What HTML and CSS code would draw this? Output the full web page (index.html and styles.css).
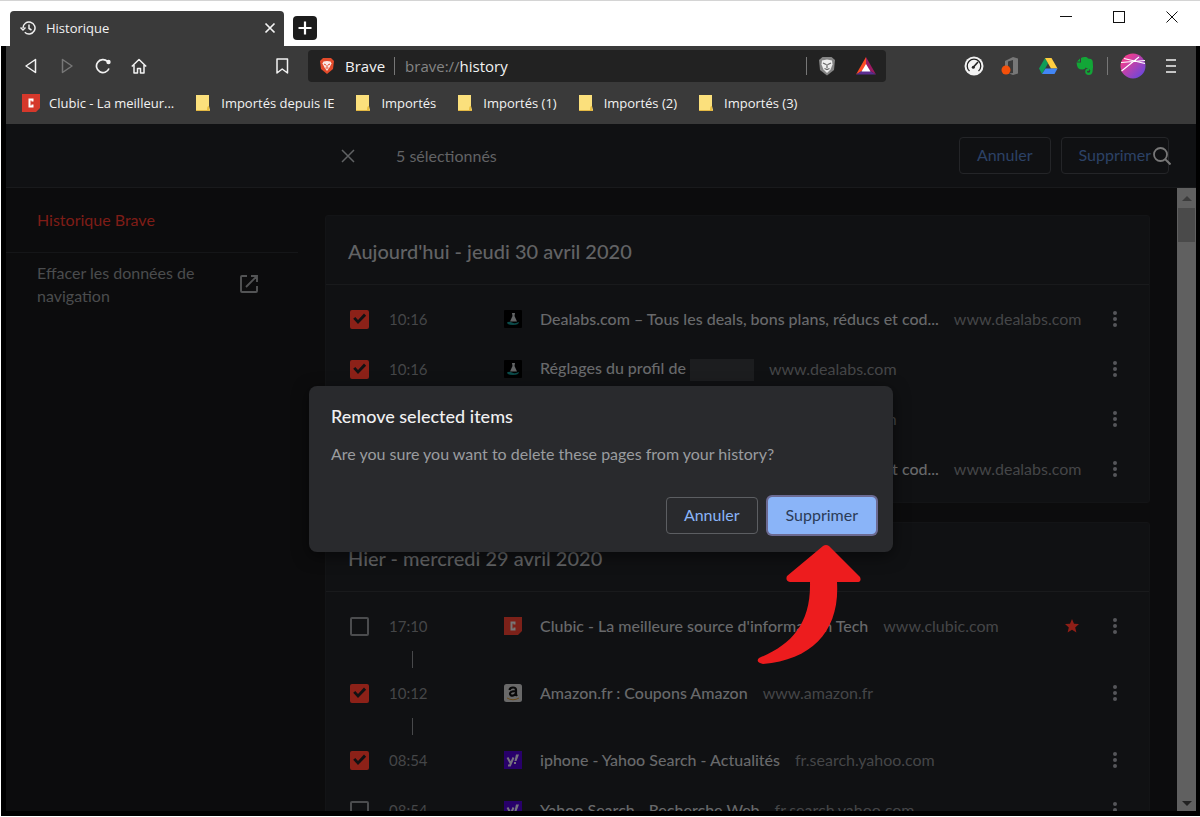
FILE: index.html
```html
<!DOCTYPE html>
<html lang="fr">
<head>
<meta charset="utf-8">
<title>Historique</title>
<link rel="stylesheet" href="styles.css">
</head>
<body>
<svg class="symbols" aria-hidden="true">
  <symbol id="dealabs" viewBox="0 0 18 18"><rect width="18" height="18" rx="1" fill="#000"/><path d="M8 3h3L10.500 6 13 11.500H6L8.500 6z" fill="#626465"/><path d="M3 12.500Q5 11 8 12.500T15 12Q15 15 9 15T3 12.500" fill="#0b4a49"/></symbol>
  <symbol id="clubic" viewBox="0 0 18 18"><path d="M0 0h18v14l-4 4H0z"/><path d="M10.500 7.500V5.500h-3v7h3v-2" fill="none" stroke="currentColor" stroke-width="2"/></symbol>
  <symbol id="yahoo" viewBox="0 0 18 18"><rect width="18" height="18" fill="#28006a"/><path d="M3.500 6.500 6.500 12M9.500 6.500 6 14.500H4" fill="none" stroke="#77727f" stroke-width="2"/><path d="M12 3.500h3L12.500 10H10.500zM10 11h2v2h-2z" fill="#77727f"/></symbol>
  <symbol id="dots" viewBox="0 0 6 18"><circle cx="3" cy="3" r="2"/><circle cx="3" cy="9" r="2"/><circle cx="3" cy="15" r="2"/></symbol>
  <symbol id="folder" viewBox="0 0 16 18"><path d="M1 1h13v11l1 4v1H1z" fill="#fbe07c"/><path d="M12 17c0-3 0-5 2-5v5z" fill="#e9bd3f"/><path d="M1 16h14v1H1z" fill="#e3b843"/></symbol>
</svg>

<header class="titlebar">
  <div class="tab">
    <svg class="i16" viewBox="0 0 16 16" fill="none" stroke="#f0f0f0" stroke-width="1.500"><path d="M3 8a6 6 0 1 1 1.800 4.300M.5 7.500 3 10l2.500-2.500M9 4.500V8.500l2.500 1.500"/></svg>
    <span class="tab-title">Historique</span>
    <button class="plain" aria-label="Fermer l'onglet"><svg class="i12" viewBox="0 0 12 12"><path d="m1.500 1.500 9 9m0-9-9 9" stroke="#f4f4f4" stroke-width="1.700"/></svg></button>
  </div>
  <button class="newtab" aria-label="Nouvel onglet"><svg class="i16" viewBox="0 0 16 16"><path d="M8 1.500v13M1.500 8h13" stroke="#fff" stroke-width="2.200"/></svg></button>
  <div class="winbuttons">
    <button class="plain" aria-label="Réduire"><svg class="i12" viewBox="0 0 12 12"><path d="M0 5.500h12" stroke="#111"/></svg></button>
    <button class="plain" aria-label="Agrandir"><svg class="i12" viewBox="0 0 12 12"><rect x=".5" y=".5" width="11" height="11" fill="none" stroke="#111"/></svg></button>
    <button class="plain" aria-label="Fermer"><svg class="i12" viewBox="0 0 12 12"><path d="m.5.5 11 11m0-11-11 11" stroke="#111"/></svg></button>
  </div>
</header>

<div class="window">
  <nav class="toolbar">
    <div class="navbuttons">
      <button class="plain" aria-label="Précédent"><svg class="i16" viewBox="0 0 16 16"><path d="M12.500 1.500v13L3 8z" fill="none" stroke="#f2f2f2" stroke-width="1.500" stroke-linejoin="round"/></svg></button>
      <button class="plain" aria-label="Suivant"><svg class="i16" viewBox="0 0 16 16"><path d="M3.500 1.500v13L13 8z" fill="none" stroke="#777" stroke-width="1.500" stroke-linejoin="round"/></svg></button>
      <button class="plain" aria-label="Actualiser"><svg class="i16" viewBox="0 0 16 16"><path d="M14 10.500A6.500 6.500 0 1 1 12.500 3.400" fill="none" stroke="#f2f2f2" stroke-width="1.700"/><circle cx="13.500" cy="4" r="2.200" fill="#f2f2f2"/></svg></button>
      <button class="plain" aria-label="Accueil"><svg class="i16" viewBox="0 0 16 16"><path d="M.8 8.500 8 1.500l7.200 7M3 7v8h3.500v-4.500h3V15H13V7" fill="none" stroke="#f2f2f2" stroke-width="1.500" stroke-linejoin="round"/></svg></button>
    </div>
    <button class="plain mark" aria-label="Ajouter aux favoris"><svg class="i16" viewBox="0 0 16 16"><path d="M3 1h10.500v14L8.200 11 3 15z" fill="none" stroke="#f2f2f2" stroke-width="1.500" stroke-linejoin="round"/></svg></button>
    <div class="urlbar">
      <svg class="i18" viewBox="0 0 18 18"><path d="M5 1h8l3 3-1 8-6 5-6-5L2 4z" fill="#e34b2b"/><path d="M5.500 4.500 9 4l3.500.5 1 2-2 4L9 14l-2.500-3.500-2-4z" fill="#fbe9e4"/><path d="m6 7 2 1m4-1-2 1m-1 0v2.500m-1.500.5h3" stroke="#e34b2b" fill="none"/></svg>
      <span class="brand">Brave</span><span class="bar"></span>
      <span class="url"><span class="scheme">brave://</span>history</span>
      <span class="bar"></span>
      <svg class="i20" viewBox="0 0 20 20"><path d="M5.500 1h9L18 4l-1 10-7 5.500L3 14 2 4z" fill="#858585"/><path d="M5 4.500 10 3.500l5 1 .5 4-2 5L10 17l-3.500-3.500-2-5z" fill="#eee"/><path d="m6 7 3 1.500M14 7l-3 1.500M10 8v4m-2.500.5 2.500 1 2.500-1" stroke="#666" fill="none" stroke-width="1.200"/></svg>
      <svg class="i20" viewBox="0 0 20 20"><path d="M10 1 0 18.500l10-6z" fill="#ff4b24"/><path d="m10 1 10 17.500-10-6z" fill="#9d1b63"/><path d="M0 18.500h20l-10-6z" fill="#5b2d91"/><path d="m10 8 4.500 7.500h-9z" fill="#fff"/></svg>
    </div>
    <div class="extensions">
      <svg class="i20" viewBox="0 0 20 20"><circle cx="10" cy="10" r="9.500" fill="#f2f2f2"/><path d="M5.500 15a6.800 6.800 0 1 1 9 0" fill="none" stroke="#222" stroke-width="1.300"/><path d="m9.500 11 4.500-5" stroke="#222" stroke-width="1.600"/><circle cx="9.300" cy="11.300" r="1.500" fill="#222"/></svg>
      <svg class="i20" viewBox="0 0 20 20"><path d="M4 5 12 1l5 1.500v15L12 19l-4-1.500 4-.5V4L7 5.500V12l-3 1z" fill="#777"/><circle cx="5" cy="14" r="4.500" fill="#f4500b"/></svg>
      <svg class="i20" viewBox="0 0 20 20"><path d="M7 2 1 12.500 4 18l6-10.500z" fill="#109d58"/><path d="M7 2h6.500l6 10.500H13z" fill="#ffcd40"/><path d="M7.500 12.500h12L16.500 18H4z" fill="#4286f5"/></svg>
      <svg class="i20" viewBox="0 0 20 20"><path d="M1.500 6.500H6V2q2-1.500 5-1 1.500.3 2 1.500l3 .5q1.500.5 1.700 2.500.8 6-.2 10.500-.7 3-3.500 3c-3 0-3.800-1.500-3.800-3.500 0-2.500 2-3 4-2.500v1.700h-1.500q-1 .3-.7 1.300.3.800 1.500.8 1.800 0 1.800-2.300 0-1.700-2.500-2-1.500-.2-2-1-.7 2-3 2-3.500 0-4.800-1.500-1-1.500-1.500-5.500zM2 5.500 5 2.500v3z" fill="#12a637"/></svg>
      <span class="bar"></span>
      <svg class="avatar" viewBox="0 0 26 26"><defs><linearGradient id="av" x1="0" y1="0" x2="1" y2="1"><stop offset=".2" stop-color="#ed3d91"/><stop offset="1" stop-color="#5549e8"/></linearGradient></defs><circle cx="13" cy="13" r="12.500" fill="url(#av)"/><path d="M4 5.500 25 10.500M1.500 18 19 4M1 9.500l24-2" fill="none" stroke="#fff" stroke-width="1.100"/></svg>
      <button class="plain" aria-label="Menu"><svg class="i16" viewBox="0 0 16 16"><path d="M3 2h10M3 8h10M3 14h10" stroke="#f4f4f4" stroke-width="1.700"/></svg></button>
    </div>
  </nav>
  <nav class="bookmarks">
    <a href="#clubic"><svg class="i18 clubic-bright"><use href="#clubic"/></svg>Clubic - La meilleur...</a>
    <a href="#ie"><svg class="i18"><use href="#folder"/></svg>Importés depuis IE</a>
    <a href="#imp"><svg class="i18"><use href="#folder"/></svg>Importés</a>
    <a href="#imp1"><svg class="i18"><use href="#folder"/></svg>Importés (1)</a>
    <a href="#imp2"><svg class="i18"><use href="#folder"/></svg>Importés (2)</a>
    <a href="#imp3"><svg class="i18"><use href="#folder"/></svg>Importés (3)</a>
  </nav>

  <div class="page">
    <div class="selection">
      <button class="plain" aria-label="Effacer la sélection"><svg class="i14" viewBox="0 0 14 14"><path d="m1 1 12 12M13 1 1 13" stroke="#606264" stroke-width="1.500"/></svg></button>
      <span class="count">5 sélectionnés</span>
      <button class="btn dim">Annuler</button>
      <div class="delete-wrap"><button class="btn dim">Supprimer</button><svg class="search i18" viewBox="0 0 18 18"><circle cx="7.500" cy="7.500" r="6.500" fill="none" stroke="#777" stroke-width="1.800"/><path d="m12 12 5.500 5.500" stroke="#777" stroke-width="2"/></svg></div>
    </div>
    <div class="columns">
      <aside class="sidebar">
        <a class="current" href="#history">Historique Brave</a>
        <a class="clear" href="#clear"><span>Effacer les données de navigation</span><svg class="i20" viewBox="0 0 20 20"><path d="M8 2H3q-1 0-1 1v14q0 1 1 1h14q1 0 1-1v-5M12 2h6v6M18 2 7 13" fill="none" stroke="#535455" stroke-width="1.900"/></svg></a>
      </aside>
      <main class="list">
        <section class="card">
          <h2>Aujourd'hui - jeudi 30 avril 2020</h2>
          <ul>
            <li><input type="checkbox" aria-label="Dealabs.com" checked><time>10:16</time><svg class="fav"><use href="#dealabs"/></svg><a class="title" href="#a1">Dealabs.com – Tous les deals, bons plans, réducs et cod...</a><span class="domain">www.dealabs.com</span><button class="plain more" aria-label="Actions"><svg><use href="#dots"/></svg></button></li>
            <li><input type="checkbox" aria-label="Réglages du profil" checked><time>10:16</time><svg class="fav"><use href="#dealabs"/></svg><a class="title" href="#a2">Réglages du profil de <span class="redacted"></span></a><span class="domain">www.dealabs.com</span><button class="plain more" aria-label="Actions"><svg><use href="#dots"/></svg></button></li>
            <li><input type="checkbox" aria-label="Réglages du profil" checked><time>10:16</time><svg class="fav"><use href="#dealabs"/></svg><a class="title" href="#a3">Réglages du profil de <span class="redacted"></span></a><span class="domain">www.dealabs.com</span><button class="plain more" aria-label="Actions"><svg><use href="#dots"/></svg></button></li>
            <li><input type="checkbox" aria-label="Dealabs.com"><time>10:16</time><svg class="fav"><use href="#dealabs"/></svg><a class="title" href="#a4">Dealabs.com – Tous les deals, bons plans, réducs et cod...</a><span class="domain">www.dealabs.com</span><button class="plain more" aria-label="Actions"><svg><use href="#dots"/></svg></button></li>
          </ul>
        </section>
        <section class="card">
          <h2>Hier - mercredi 29 avril 2020</h2>
          <ul>
            <li class="gap"><input type="checkbox" aria-label="Clubic"><time>17:10</time><svg class="fav clubic-dim"><use href="#clubic"/></svg><a class="title" href="#b1">Clubic - La meilleure source d'information Tech</a><span class="domain">www.clubic.com</span><svg class="star" viewBox="0 0 14 14"><path d="m7 0 2 4.700 5 .4-3.800 3.300L11.400 13.500 7 10.800l-4.400 2.700 1.200-5.100L0 5.100l5-.4z" fill="#8f1f17"/></svg><button class="plain more" aria-label="Actions"><svg><use href="#dots"/></svg></button></li>
            <li class="gap"><input type="checkbox" aria-label="Amazon" checked><time>10:12</time><svg class="fav" viewBox="0 0 18 18"><rect width="18" height="18" rx="2.500" fill="#696969"/><path d="M5.500 6Q6 3.500 9 3.500t3 2.500v4.500l1 1.500M12 7Q6 7 6 9.800c0 2.500 5 2.500 6-1" fill="none" stroke="#080808" stroke-width="2.200"/><path d="M3 14q6 3.500 12 0" fill="none" stroke="#6b4a17"/></svg><a class="title" href="#b2">Amazon.fr : Coupons Amazon</a><span class="domain">www.amazon.fr</span><button class="plain more" aria-label="Actions"><svg><use href="#dots"/></svg></button></li>
            <li><input type="checkbox" aria-label="iphone" checked><time>08:54</time><svg class="fav"><use href="#yahoo"/></svg><a class="title" href="#b3">iphone - Yahoo Search - Actualités</a><span class="domain">fr.search.yahoo.com</span><button class="plain more" aria-label="Actions"><svg><use href="#dots"/></svg></button></li>
            <li><input type="checkbox" aria-label="Yahoo Search"><time>08:54</time><svg class="fav"><use href="#yahoo"/></svg><a class="title" href="#b4">Yahoo Search - Recherche Web</a><span class="domain">fr.search.yahoo.com</span><button class="plain more" aria-label="Actions"><svg><use href="#dots"/></svg></button></li>
          </ul>
        </section>
      </main>
      <div class="scrollbar"><span class="up"></span><span class="thumb"></span><span class="down"></span></div>
    </div>

    <div class="overlay">
      <div class="dialog" role="dialog" aria-labelledby="dlg-title">
        <h1 id="dlg-title">Remove selected items</h1>
        <p>Are you sure you want to delete these pages from your history?</p>
        <div class="actions"><button class="btn">Annuler</button><button class="btn primary">Supprimer</button></div>
        <svg class="arrow" viewBox="0 0 104 120"><path d="M66 2q3-2 6 0l31 31q2 5-3 5H80c3 48-24 78-74 82q-8-2-4-6c32-13 52-34 51-76H33q-5-1-3-6z" fill="#ed1c1e"/></svg>
      </div>
    </div>
  </div>
</div>
</body>
</html>
```

FILE: styles.css
```css
* { box-sizing: border-box; }
body {
  margin: 0;
  height: 100vh;
  display: flex;
  flex-direction: column;
  background: #fff;
  border-top: 1px solid #d4d4d4;
  padding-bottom: 1px;
  font: 14px/20px "Open Sans", sans-serif;
  color: #f2f2f2;
  overflow: hidden;
}
a { color: inherit; text-decoration: none; }
svg { display: block; flex: none; }
.symbols { position: absolute; width: 0; height: 0; }
.plain { border: 0; padding: 0; background: none; flex: none; }
.i12 { width: 12px; height: 12px; }
.i14 { width: 14px; height: 14px; }
.i16 { width: 16px; height: 16px; }
.i18 { width: 18px; height: 18px; }
.i20 { width: 20px; height: 20px; }

.titlebar { display: flex; height: 45px; flex: none; padding: 10px 22px 0 10px; }
.tab {
  display: flex; align-items: center; gap: 10px;
  width: 274px; padding: 0 8px 2px 10px;
  background: #3a3a3a; border-radius: 4px 4px 0 0;
  font-size: 13px;
}
.tab-title { flex: 1; }
.newtab {
  width: 24px; height: 24px; margin: 5px 0 0 9px; padding: 4px;
  border: 0; border-radius: 4px; background: #1c1c1c;
}
.winbuttons { display: flex; gap: 41px; margin-left: auto; height: 12px; }

.window {
  flex: 1; min-height: 0; display: flex; flex-direction: column;
  margin-left: 1px;
  border: solid #000; border-width: 0 4px 5px 5px;
  background: #3a3a3a;
}
.toolbar { display: flex; align-items: center; height: 40px; padding: 0 17px; flex: none; }
.navbuttons { display: flex; gap: 20px; }
.mark { margin-left: auto; margin-right: 18px; }
.urlbar {
  flex: none; width: 50%; height: 32px;
  display: flex; align-items: center; padding: 0 10px;
  background: #222; border-radius: 4px; font-size: 15px;
}
.brand { margin: 0 9px; }
.bar { width: 1px; height: 18px; background: #777; }
.url { margin-left: 10px; flex: 1; }
.scheme { color: #858585; }
.urlbar .i20 { margin-left: 10px; }
.urlbar .i20:last-child { margin-left: 19px; }
.extensions { display: flex; align-items: center; gap: 17px; margin-left: 78px; }
.extensions .bar { margin: 0 -5px; }
.avatar { width: 26px; height: 26px; }
.bookmarks { display: flex; gap: 20px; height: 38px; padding: 0 16px 5px; flex: none; align-items: center; font-size: 13px; }
.bookmarks a { display: flex; align-items: center; gap: 9px; }
.clubic-bright { fill: #d5382b; color: #fff; }

.page {
  position: relative; flex: 1; min-height: 0;
  display: flex; flex-direction: column;
  background: #0c0c0d; color: #626365;
  font: 16px/23px Lato, sans-serif;
}
.selection {
  display: flex; align-items: center; height: 64px; flex: none;
  padding: 0 27px 0 335px;
  background: #101113; border-bottom: 1px solid #191a1c;
}
.count { margin: 0 auto 0 41px; line-height: 22px; }
.btn {
  height: 37px; padding: 0 17px 1px;
  border: 1px solid #5c5e62; border-radius: 4px;
  background: transparent; color: #8ab4f8;
  font: 16px/20px Lato, sans-serif;
}
.btn.dim { border-color: #242528; color: #2c4266; }
.delete-wrap { position: relative; margin-left: 10px; }
.search { position: absolute; right: -2px; top: 10px; }

.columns { flex: 1; min-height: 0; display: flex; }
.sidebar { width: 292px; flex: none; }
.current { display: block; padding: 20px 31px 21px; color: #7f1d17; border-bottom: 1px solid #151618; }
.clear { display: flex; align-items: center; justify-content: space-between; padding: 8px 39px 0 31px; color: #4b4c4e; }
.clear span { width: 170px; }
.list { flex: 1; min-width: 0; overflow: hidden; padding: 27px 27px 0; }
.card { background: #101113; border: 1px solid #131416; border-radius: 3px; margin-bottom: 19px; }
.card h2 {
  margin: 0; padding: 23px 22px 21px;
  border-bottom: 1px solid #191a1c;
  font: 500 20px/24px Lato, sans-serif; color: #626365;
}
.card ul { list-style: none; margin: 0; padding: 9px 0 8px; }
.card li { position: relative; display: flex; align-items: center; height: 50px; padding: 0 31px 0 24px; white-space: nowrap; }
.card li.gap { margin-bottom: 17px; }
.card li.gap::after { content: ""; position: absolute; left: 86px; top: 50px; width: 1px; height: 17px; background: #48494b; }
.card input {
  appearance: none; flex: none; width: 19px; height: 19px; margin: 0;
  border: 2px solid #4b4c4e; border-radius: 2px;
}
.card input:checked { background: #8c2118; border-color: #8c2118; }
.card input:checked::after {
  content: ""; display: block; width: 15px; height: 15px; background: #101113;
  clip-path: polygon(8% 48%, 22% 36%, 40% 56%, 80% 14%, 94% 28%, 40% 84%);
}
.card time { width: 115px; margin-left: 20px; font-size: 15px; color: #454648; }
.fav { width: 18px; height: 18px; }
.clubic-dim { fill: #7c2119; color: #777; }
.title { margin: 0 15px 0 18px; font-weight: 500; line-height: 22px; color: #68696b; }
.domain { color: #454648; line-height: 22px; }
.redacted { display: inline-block; width: 64px; height: 22px; background: #1c1d1f; vertical-align: middle; }
.star { width: 14px; height: 14px; margin: 0 33px 0 auto; }
.more { width: 6px; height: 18px; margin-left: auto; fill: #55565a; }
.star + .more { margin-left: 0; }
.more svg { width: 6px; height: 18px; }

.scrollbar { width: 19px; flex: none; background: #606060; display: flex; flex-direction: column; align-items: center; }
.up, .down { height: 0; border: 5px solid transparent; }
.up { border-bottom-color: #3c3c3c; margin: 3px 0 7px; }
.thumb { width: 17px; height: 34px; background: #4a4a4a; }
.down { border-top-color: #222; margin-top: auto; }

.overlay { position: absolute; inset: 0; padding-top: 2px; display: flex; align-items: center; justify-content: center; }
.dialog {
  position: relative; width: 584px; padding: 18px 17px 18px 22px;
  background: #292a2d; border-radius: 8px;
  box-shadow: 0 4px 16px rgba(0, 0, 0, .5);
  color: #9a9c9f;
}
.dialog h1 { margin: 0; font: 500 18px/24px Lato, sans-serif; color: #f0f0f1; }
.dialog p { margin: 14px 0 32px; }
.actions { display: flex; justify-content: flex-end; gap: 10px; }
.primary { background: #8ab4f8; border-color: #8ab4f8; color: #2b3b57; box-shadow: 0 0 0 2px #6b6a92; }
.arrow { position: absolute; left: 448px; top: 158px; width: 104px; height: 120px; }
```
